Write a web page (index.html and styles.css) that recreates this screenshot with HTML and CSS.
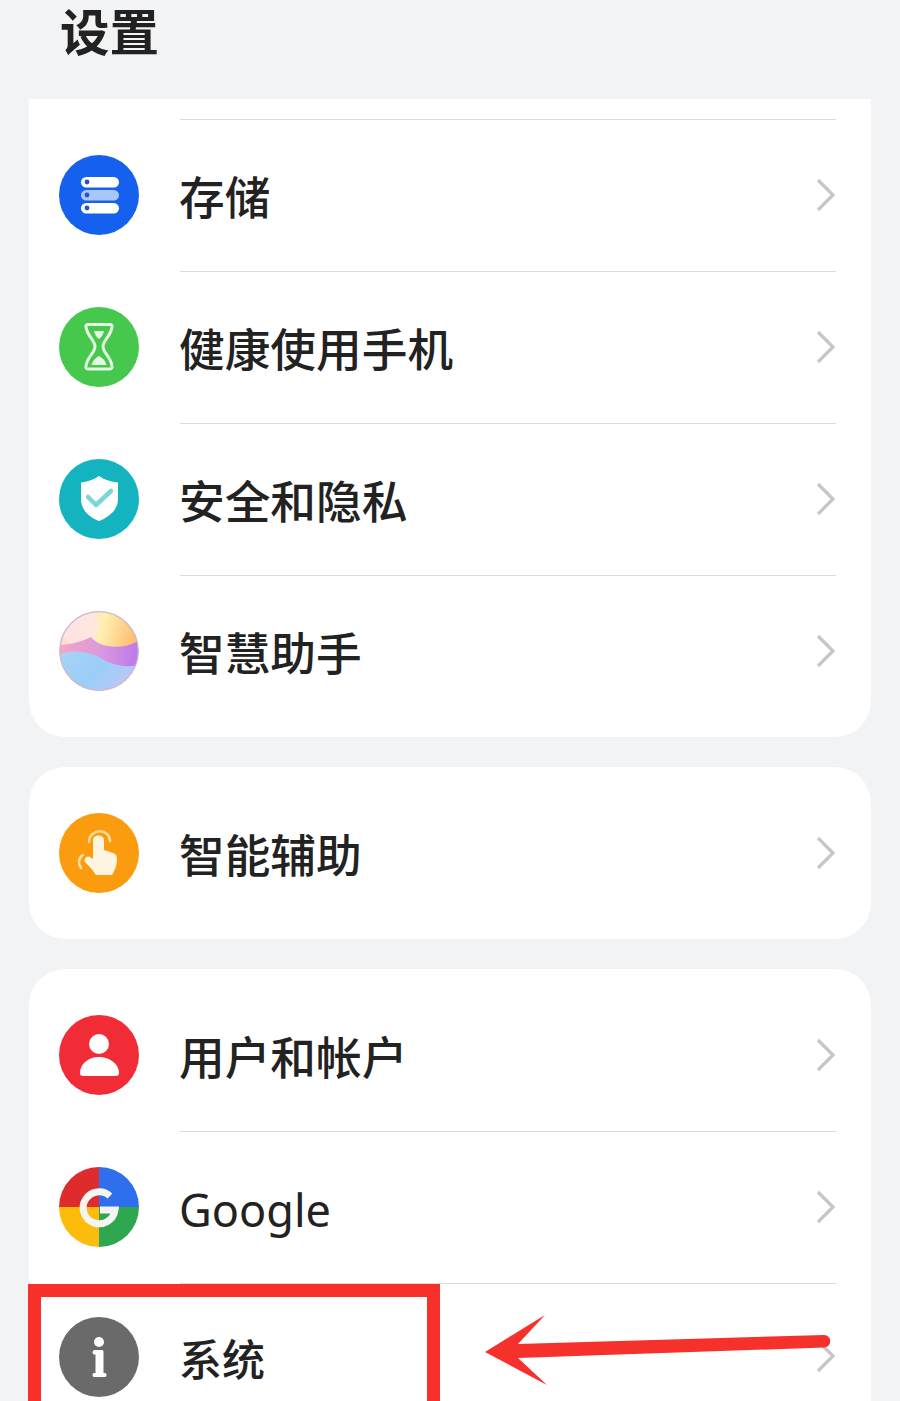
FILE: index.html
```html
<!DOCTYPE html>
<html lang="zh-CN">
<head>
<meta charset="utf-8">
<title>设置</title>
<link rel="stylesheet" href="styles.css">
</head>
<body>
<div class="page">
  <header class="header"><h1 class="title">设置</h1></header>

  <section class="card card-top">
    <div class="row">
      <svg class="icon" viewBox="0 0 80 80"><circle cx="40" cy="40" r="40" fill="#1560ee"/><rect x="22" y="22" width="38" height="10.500" rx="5.200" fill="#fff"/><rect x="22" y="35" width="38" height="10.500" rx="5.200" fill="#a9c6f8"/><rect x="22" y="48" width="38" height="10.500" rx="5.200" fill="#fff"/><circle cx="28" cy="27" r="2.400" fill="#2a55c0"/><circle cx="28" cy="40" r="2.400" fill="#2a55c0"/><circle cx="28" cy="53" r="2.400" fill="#2a55c0"/></svg>
      <div class="row-main"><span class="label">存储</span><svg class="chevron" viewBox="0 0 20 34"><path d="M2 2 L17 17 L2 32"/></svg></div>
    </div>
    <div class="row">
      <svg class="icon" viewBox="0 0 80 80"><circle cx="40" cy="40" r="40" fill="#46c84c"/><path d="M29 17.500 H51 Q53.500 17.500 53 20 C52 29 44 33 44 39.500 C44 46 52 50 53 59 Q53.500 62 51 62 H29 Q26.500 62 27 59 C28 50 36 46 36 39.500 C36 33 28 29 27 20 Q26.500 17.500 29 17.500 Z" fill="none" stroke="#e4f7e2" stroke-width="3"/><path d="M35 24 H45 Q44 29 40 32 Q36 29 35 24 Z" fill="#e4f7e2"/><path d="M40 49 Q46 52 47.500 58 H32.500 Q34 52 40 49 Z" fill="#e4f7e2"/></svg>
      <div class="row-main"><span class="label">健康使用手机</span><svg class="chevron" viewBox="0 0 20 34"><path d="M2 2 L17 17 L2 32"/></svg></div>
    </div>
    <div class="row">
      <svg class="icon" viewBox="0 0 80 80"><circle cx="40" cy="40" r="40" fill="#13b4bf"/><path d="M40 17 C46 21 52 23 59 23.500 V40 C59 51 50 58 40 62 C30 58 22 51 22 40 V23.500 C28 23 34 21 40 17 Z" fill="#fff"/><path d="M29 38 L37 46 L52 32" fill="none" stroke="#7dd6d6" stroke-width="4.500" stroke-linecap="round" stroke-linejoin="round"/></svg>
      <div class="row-main"><span class="label">安全和隐私</span><svg class="chevron" viewBox="0 0 20 34"><path d="M2 2 L17 17 L2 32"/></svg></div>
    </div>
    <div class="row">
      <svg class="icon" viewBox="0 0 80 80">
        <defs>
          <clipPath id="orb"><circle cx="40" cy="40" r="39.500"/></clipPath>
          <linearGradient id="orbTop" x1="0" y1="0" x2="1" y2="0.300"><stop offset="0" stop-color="#fcd3de"/><stop offset="0.550" stop-color="#fff0b0"/><stop offset="1" stop-color="#fbb86e"/></linearGradient>
          <linearGradient id="orbBand" x1="0" y1="0" x2="1" y2="0"><stop offset="0" stop-color="#f3a6c6"/><stop offset="0.500" stop-color="#dd99dc"/><stop offset="1" stop-color="#bb78ec"/></linearGradient>
          <linearGradient id="orbLow" x1="0" y1="0" x2="1" y2="0.500"><stop offset="0" stop-color="#a5d4f6"/><stop offset="0.600" stop-color="#9ccdf8"/><stop offset="1" stop-color="#bcc8f6"/></linearGradient>
        </defs>
        <g clip-path="url(#orb)">
          <rect width="80" height="80" fill="url(#orbTop)"/>
          <circle cx="20" cy="14" r="20" fill="#ffe6ec" opacity="0.700"/>
          <path d="M0 34 C12 34 24 30 32 26 C40 36 60 40 80 30 V80 H0 Z" fill="url(#orbBand)"/>
          <path d="M0 44 C14 38 28 40 40 46 C52 54 66 57 80 54 V80 H0 Z" fill="url(#orbLow)"/>
        </g>
        <circle cx="40" cy="40" r="39.300" fill="none" stroke="#cdb9c9" stroke-width="1.200"/>
      </svg>
      <div class="row-main"><span class="label">智慧助手</span><svg class="chevron" viewBox="0 0 20 34"><path d="M2 2 L17 17 L2 32"/></svg></div>
    </div>
  </section>

  <section class="card">
    <div class="row">
      <svg class="icon" viewBox="0 0 80 80"><circle cx="40" cy="40" r="40" fill="#fb9c0e"/><path d="M30 29 C30 15 51 15 51 28" fill="none" stroke="#ffdca0" stroke-width="2.500" stroke-linecap="round"/><path d="M24 42 C19 45 19 51 22 55" fill="none" stroke="#ffdca0" stroke-width="2.500" stroke-linecap="round"/><path d="M34 27 C34 21 45 21 45 27 V37 L54 40 C57 41 58 43 58 46 C58 52 56 57 53 62 H37 C34 57 30 53 26 49 C24 46 28 42 31 44 L34 46 Z" fill="#fff4e0"/></svg>
      <div class="row-main"><span class="label">智能辅助</span><svg class="chevron" viewBox="0 0 20 34"><path d="M2 2 L17 17 L2 32"/></svg></div>
    </div>
  </section>

  <section class="card">
    <div class="row">
      <svg class="icon" viewBox="0 0 80 80"><circle cx="40" cy="40" r="40" fill="#f22c36"/><circle cx="40" cy="29" r="10" fill="#fff"/><path d="M40 42 C51 42 60 49 60 58 Q60 61 57 61 H24 Q21 61 21 58 C21 49 29 42 40 42 Z" fill="#fff"/></svg>
      <div class="row-main"><span class="label">用户和帐户</span><svg class="chevron" viewBox="0 0 20 34"><path d="M2 2 L17 17 L2 32"/></svg></div>
    </div>
    <div class="row">
      <svg class="icon" viewBox="0 0 80 80"><path d="M40 40 V0 A40 40 0 0 0 0 40 Z" fill="#de2b2b"/><path d="M40 40 V0 A40 40 0 0 1 80 40 Z" fill="#2f6eec"/><path d="M40 40 H0 A40 40 0 0 0 40 80 Z" fill="#fcbc0c"/><path d="M40 40 H80 A40 40 0 0 1 40 80 Z" fill="#2fa650"/><path d="M51 29 A16 16 0 1 0 56 43 H41" fill="none" stroke="#f4f4f0" stroke-width="7"/></svg>
      <div class="row-main"><span class="label label-latin">Google</span><svg class="chevron" viewBox="0 0 20 34"><path d="M2 2 L17 17 L2 32"/></svg></div>
    </div>
    <div class="row row-last">
      <svg class="icon" viewBox="0 0 80 80"><circle cx="40" cy="40" r="40" fill="#6a6a6a"/><circle cx="40" cy="25" r="5" fill="#fff"/><path d="M36 33 H43 Q44.500 33 44.500 34.500 V56 H46 Q47.500 56 47.500 58 Q47.500 60 46 60 H35 Q33.500 60 33.500 58 Q33.500 56 35 56 H36.500 V37.500 H35 Q33.500 37.500 33.500 35.200 Q33.500 33 36 33 Z" fill="#fff"/></svg>
      <div class="row-main"><span class="label label-small">系统</span><svg class="chevron" viewBox="0 0 20 34"><path d="M2 2 L17 17 L2 32"/></svg></div>
    </div>
  </section>

  <div class="highlight"></div>
  <svg class="arrow" viewBox="0 0 900 1401"><path d="M485 1352 L545 1315 L518 1344 L824 1335 A6 6 0 0 1 824 1347.500 L518 1358 L547 1385 Z" fill="#f6302a"/></svg>
</div>
</body>
</html>
```

FILE: styles.css
```css
html, body {
  margin: 0;
  padding: 0;
  height: 1401px;
  overflow: hidden;
  background: #f2f3f5;
}

.page {
  position: relative;
  width: 900px;
  height: 1401px;
  overflow: hidden;
  display: flex;
  flex-direction: column;
  gap: 30px;
  font-family: "Noto Sans CJK SC", "Noto Sans", sans-serif;
  color: #222;
}

.header {
  height: 69px;
  margin-bottom: -30px;
  padding-left: 60px;
  flex: none;
}

.title {
  margin: 0;
  font-size: 49.500px;
  line-height: 59px;
  font-weight: 700;
  color: #222;
}

.card {
  flex: none;
  margin: 0 29px;
  padding: 10px 35px 10px 30px;
  background: #fff;
  border-radius: 36px;
}

.card-top {
  margin-top: 30px;
  padding-top: 20px;
  border-radius: 0 0 36px 36px;
}

.row {
  display: flex;
  align-items: center;
  height: 152px;
  gap: 41px;
}

.row-last {
  height: 147px;
}

.icon {
  flex: none;
  width: 80px;
  height: 80px;
}

.row-main {
  flex: 1;
  align-self: stretch;
  display: flex;
  align-items: center;
  justify-content: space-between;
  border-top: 1px solid #dcdcdc;
}

.card:not(.card-top) .row:first-child .row-main {
  border-top-color: transparent;
}

.label {
  margin-left: -1px;
  font-size: 45.700px;
  font-weight: 500;
  line-height: 1;
}

.label-latin {
  margin-top: 4px;
  font-family: "Noto Sans", sans-serif;
  font-size: 45px;
  font-weight: 400;
}

.label-small {
  font-size: 43px;
}

.chevron {
  flex: none;
  width: 20px;
  height: 34px;
  margin-bottom: 2px;
  fill: none;
  stroke: #c6c6c6;
  stroke-width: 3.200;
}

.highlight {
  position: absolute;
  left: 28px;
  top: 1284px;
  width: 386px;
  height: 140px;
  border: 13px solid #f7302a;
}

.arrow {
  position: absolute;
  left: 0;
  top: 0;
  width: 900px;
  height: 1401px;
}
```
